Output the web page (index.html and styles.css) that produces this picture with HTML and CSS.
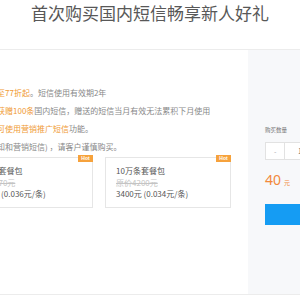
FILE: index.html
```html
<!DOCTYPE html>
<html lang="zh-CN">
<head>
<meta charset="utf-8">
<link rel="stylesheet" href="styles.css">
</head>
<body>
<header class="title">首次购买国内短信畅享新人好礼</header>
<main class="panel">
  <section class="info">
    <div class="notes">
      <p><span class="hl">至77折起</span>。短信使用有效期2年</p>
      <p><span class="hl">获赠100条</span>国内短信，赠送的短信当月有效无法累积下月使用</p>
      <p><span class="hl">可使用营销推广短信</span>功能。</p>
      <p>知和营销短信) ，请客户谨慎购买。</p>
    </div>
    <div class="cards">
      <div class="card">
        <span class="hot">Hot</span>
        <div class="name">1万条套餐包</div>
        <div class="orig">原价470元</div>
        <div class="price">360元 (0.036元/条)</div>
      </div>
      <div class="card">
        <span class="hot">Hot</span>
        <div class="name">10万条套餐包</div>
        <div class="orig">原价4200元</div>
        <div class="price">3400元 (0.034元/条)</div>
      </div>
    </div>
  </section>
  <aside class="side">
    <div class="label">购买数量</div>
    <div class="stepper">
      <span class="minus">-</span>
      <span class="qty">1</span>
      <span class="plus">+</span>
    </div>
    <div class="amount"><span class="num">40</span><span class="unit">元</span></div>
    <button class="buy">立即购买</button>
  </aside>
</main>
</body>
</html>
```
FILE: styles.css
```css
* { box-sizing: border-box; margin: 0; padding: 0; }
html, body { width: 300px; height: 300px; overflow: hidden; background: #fff; }
body { font-family: "Noto Sans CJK SC", "Noto Sans", sans-serif; color: #888; }

.title {
  height: 50px;
  border-bottom: 1px solid #ececec;
  text-align: center;
  font-size: 17px;
  line-height: 25px;
  color: #585858;
  white-space: nowrap;
}

.panel {
  display: grid;
  grid-template-columns: 248px 52px;
  height: 245px;
  border-bottom: 1px solid #ececec;
}

.info { overflow: hidden; padding-top: 34px; }
.notes { margin-left: -3px; font-size: 8px; line-height: 18px; white-space: nowrap; }
.hl { color: #f09a35; }

.cards {
  display: flex;
  gap: 12px;
  margin-top: 1px;
  margin-left: -33px;
}
.card {
  position: relative;
  flex: 0 0 126px;
  height: 51px;
  border: 1px solid #e6e6e6;
  background: #fff;
  padding: 7px 0 0 10px;
  font-size: 8px;
  line-height: 11.5px;
  white-space: nowrap;
}
.name { color: #555; }
.orig { color: #c4c4c4; text-decoration: line-through; }
.price { color: #555; }
.hot {
  position: absolute;
  top: -3px;
  right: -1px;
  width: 15px;
  height: 7px;
  background: #f6a23c;
  color: #fff;
  font-size: 5px;
  line-height: 7px;
  text-align: center;
  font-family: "Liberation Sans", sans-serif;
  font-weight: bold;
}

.side {
  background: #f7f8fa;
  padding: 76px 0 0 17px;
  overflow: hidden;
  white-space: nowrap;
}
.label { font-size: 5.5px; line-height: 8px; color: #777; }
.stepper {
  display: flex;
  width: 70px;
  height: 18px;
  margin-top: 8px;
  border: 1px solid #e2e2e2;
  background: #fff;
  font-size: 7px;
  color: #666;
}
.stepper span { display: flex; align-items: center; justify-content: center; }
.minus { width: 20px; border-right: 1px solid #e2e2e2; color: #aaa; }
.qty { width: 30px; }
.plus { width: 20px; border-left: 1px solid #e2e2e2; }

.amount { margin-top: 10px; line-height: 16px; color: #f2893a; }
.num { font-size: 14px; font-family: "Noto Sans", sans-serif; }
.unit { font-size: 6px; margin-left: 3px; }

.buy {
  display: block;
  margin-top: 13px;
  width: 120px;
  height: 21px;
  border: none;
  background: #159cf3;
  color: #fff;
  font-size: 8px;
  font-family: inherit;
  text-align: left;
  padding-left: 40px;
}
```
